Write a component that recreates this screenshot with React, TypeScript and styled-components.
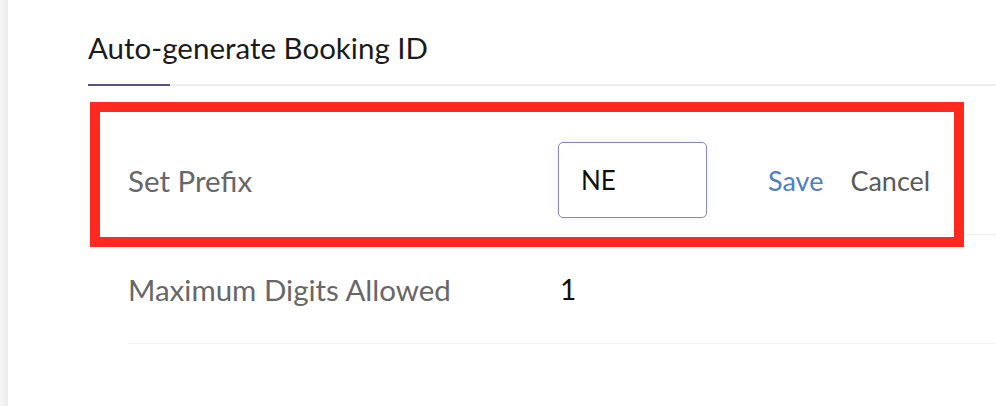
import styled, { createGlobalStyle } from "styled-components";

const GlobalStyle = createGlobalStyle`
    html, body {
        margin: 0;
        padding: 0;
        background: #ffffff;
    }
    body {
        font-family: Lato, "Open Sans", Arial, sans-serif;
        -webkit-font-smoothing: antialiased;
    }
`;

const Page = styled.div`
    display: flex;
    width: 996px;
    height: 406px;
    overflow: hidden;
    background: #ffffff;
`;

const SideStrip = styled.div`
    flex: 0 0 8px;
    height: 100%;
    background: linear-gradient(to right, #f5f5f5, #ececec);
`;

const Content = styled.div`
    position: relative;
    flex: 1;
    padding-left: 80px;
`;

const TabHeader = styled.div`
    display: flex;
    flex-direction: column;
    justify-content: flex-end;
    height: 84px;
    border-bottom: 2px solid #eeeeee;
`;

const TabTitle = styled.div`
    font-size: 29.5px;
    color: #1b1b1b;
    line-height: 34px;
    margin-bottom: 19px;
`;

const TabIndicator = styled.div`
    width: 82px;
    height: 2px;
    margin-bottom: -2px;
    background: #5a4f86;
`;

const Rows = styled.div`
    display: flex;
    flex-direction: column;
    margin-top: 40px;
    padding-left: 40px;
`;

const Row = styled.div`
    display: flex;
    align-items: center;
    height: 108px;
    border-bottom: 1px solid #f2f2f2;
`;

const Label = styled.div`
    flex: 0 0 430px;
    font-size: 29.5px;
    color: #676767;
`;

const Value = styled.div`
    font-size: 28px;
    color: #111111;
    padding-left: 2px;
`;

const PrefixInput = styled.input`
    box-sizing: border-box;
    width: 149px;
    height: 76px;
    padding: 0 0 0 22px;
    border: 1px solid #8a87c0;
    border-radius: 5px;
    box-shadow: 0 0 8px rgba(0, 0, 0, 0.07);
    font-family: inherit;
    font-size: 26px;
    color: #111111;
    outline: none;
`;

const ActionLink = styled.button<{ $primary?: boolean }>`
    border: none;
    background: none;
    padding: 0;
    margin-left: ${(p) => (p.$primary ? "61px" : "27px")};
    font-family: inherit;
    font-size: 27px;
    color: ${(p) => (p.$primary ? "#4c7fc4" : "#5a5a5a")};
    cursor: pointer;
`;

const Highlight = styled.div`
    position: absolute;
    left: 82px;
    top: 102px;
    width: 874px;
    height: 145px;
    box-sizing: border-box;
    border: 10px solid #ff2a1f;
    pointer-events: none;
`;

export default function App() {
    return (
        <>
            <GlobalStyle />
            <Page>
                <SideStrip />
                <Content>
                    <TabHeader>
                        <TabTitle>Auto-generate Booking ID</TabTitle>
                        <TabIndicator />
                    </TabHeader>
                    <Rows>
                        <Row>
                            <Label>Set Prefix</Label>
                            <PrefixInput defaultValue="NE" />
                            <ActionLink $primary>Save</ActionLink>
                            <ActionLink>Cancel</ActionLink>
                        </Row>
                        <Row>
                            <Label>Maximum Digits Allowed</Label>
                            <Value>1</Value>
                        </Row>
                    </Rows>
                    <Highlight />
                </Content>
            </Page>
        </>
    );
}
